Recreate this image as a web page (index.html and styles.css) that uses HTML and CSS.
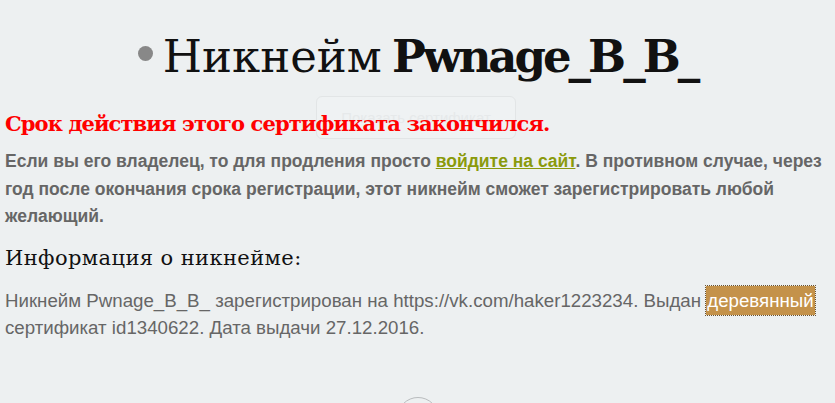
FILE: index.html
```html
<!DOCTYPE html>
<html lang="ru">
<head>
<meta charset="utf-8">
<link rel="stylesheet" href="styles.css">
</head>
<body>
<div class="page">
  <div class="ghost">Показать сертификат</div>
  <h1 class="title"><span class="dot"></span>Никнейм <b>Pwnage_B_B_</b></h1>
  <h2 class="expired">Срок действия этого сертификата закончился.</h2>
  <p class="notice">Если вы его владелец, то для продления просто <a href="#" class="link">войдите на сайт</a>. В противном случае, через год после окончания срока регистрации, этот никнейм сможет зарегистрировать любой желающий.</p>
  <h3 class="info-title">Информация о никнейме:</h3>
  <p class="info">Никнейм Pwnage_B_B_ зарегистрирован на https://vk.com/haker1223234. Выдан <span class="wood">деревянный</span> сертификат id1340622. Дата выдачи 27.12.2016.</p>
  <div class="more"><span class="circle"></span></div>
</div>
</body>
</html>
```
FILE: styles.css
```css
html, body { margin: 0; padding: 0; }
body {
  background: #edf0f1;
  height: 403px;
  overflow: hidden;
}
.page {
  position: relative;
  padding: 0 5px;
}
.title {
  margin: 0;
  padding-top: 27px;
  height: 60px;
  text-align: center;
  font-family: "DejaVu Serif", serif;
  font-weight: normal;
  font-size: 45px;
  line-height: 60px;
  color: #111;
  letter-spacing: 0;
  word-spacing: -4px;
}
.title b {
  font-weight: bold;
  letter-spacing: -3px;
}
.dot {
  display: inline-block;
  width: 15px;
  height: 15px;
  border-radius: 50%;
  background: #888;
  margin-right: 10px;
  vertical-align: 11px;
}
.expired {
  margin: 23px 0 0;
  font-family: "DejaVu Serif", serif;
  font-weight: bold;
  font-size: 21px;
  line-height: 28px;
  color: #ff0000;
  letter-spacing: -0.9px;
}
.notice {
  margin: 10px 0 0;
  font-family: "Liberation Sans", Arial, sans-serif;
  font-weight: bold;
  font-size: 17.5px;
  line-height: 27.5px;
  color: #666;
}
.link {
  color: #8a9a0b;
  text-decoration: underline;
}
.info-title {
  margin: 12px 0 0;
  font-family: "DejaVu Serif", serif;
  font-weight: normal;
  font-size: 21px;
  line-height: 30px;
  color: #111;
  letter-spacing: 0.4px;
}
.info {
  margin: 14px 0 0;
  font-family: "Liberation Sans", Arial, sans-serif;
  font-size: 18.7px;
  line-height: 27px;
  color: #666;
}
.wood {
  background: #c4924a;
  color: #fff;
  outline: 1px dotted #6b5330;
  padding: 4px 1px;
}
.more {
  display: flex;
  justify-content: center;
  margin-top: 56px;
}
.circle {
  display: block;
  width: 40px;
  height: 40px;
  border-radius: 50%;
  border: 1px solid #b9bcbe;
}
.ghost {
  position: absolute;
  z-index: -1;
  left: 316px;
  top: 96px;
  width: 200px;
  height: 43px;
  box-sizing: border-box;
  border: 1px solid #e2e5e6;
  border-radius: 6px;
  background: #eff2f3;
  font-family: "Liberation Sans", Arial, sans-serif;
  font-size: 15px;
  line-height: 41px;
  text-align: center;
  color: #e6e9ea;
}
```
